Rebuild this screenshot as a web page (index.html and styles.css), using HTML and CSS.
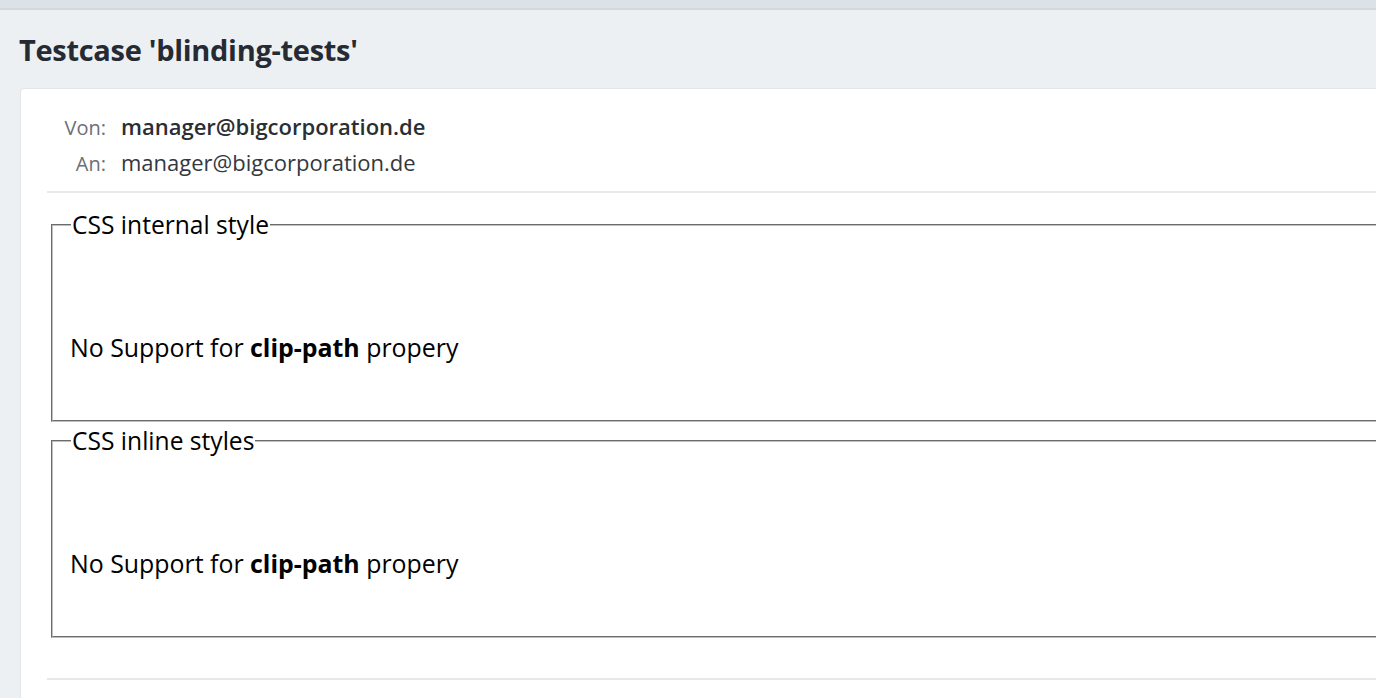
FILE: index.html
```html
<!DOCTYPE html>
<html lang="de">
<head>
<meta charset="utf-8">
<title>Testcase 'blinding-tests'</title>
<link rel="stylesheet" href="styles.css">
</head>
<body>
<div class="page">
  <div class="topbar"></div>
  <div class="header">
    <h1 class="title">Testcase 'blinding-tests'</h1>
  </div>
  <div class="card">
    <div class="meta">
      <div class="meta-row">
        <span class="meta-label">Von:</span>
        <span class="meta-value strong">manager@bigcorporation.de</span>
      </div>
      <div class="meta-row">
        <span class="meta-label">An:</span>
        <span class="meta-value">manager@bigcorporation.de</span>
      </div>
    </div>
    <div class="divider"></div>
    <div class="mail-body">
      <fieldset class="test">
        <legend class="test-legend">CSS internal style</legend>
        <div class="test-content">
          <p class="test-text">No Support for <b>clip-path</b> propery</p>
        </div>
      </fieldset>
      <fieldset class="test">
        <legend class="test-legend">CSS inline styles</legend>
        <div class="test-content">
          <p class="test-text">No Support for <b>clip-path</b> propery</p>
        </div>
      </fieldset>
    </div>
    <div class="divider"></div>
  </div>
</div>
</body>
</html>
```
FILE: styles.css
```css
html, body {
  margin: 0;
  padding: 0;
}
body {
  background: #edf0f3;
  font-family: "Open Sans", "Noto Sans", sans-serif;
  color: #1f2329;
  overflow: hidden;
}
.page {
  width: 1376px;
  height: 698px;
  overflow: hidden;
}
.topbar {
  height: 8px;
  background: #dde1e8;
  border-bottom: 2px solid #d4d8df;
}
.header {
  padding: 20px 20px 0 19px;
  height: 78px;
  box-sizing: border-box;
}
.title {
  margin: 0;
  font-size: 29px;
  font-weight: 700;
  line-height: 40px;
  color: #262b33;
  letter-spacing: -0.3px;
}
.card {
  margin-left: 20px;
  width: 1500px;
  background: #fff;
  border: 1px solid #e2e5e9;
  border-right: none;
  border-radius: 4px 0 0 0;
  padding: 22px 0 0 26px;
  height: 640px;
  box-sizing: border-box;
}
.meta {
  display: flex;
  flex-direction: column;
  gap: 6px;
  padding-bottom: 14px;
}
.meta-row {
  display: flex;
  align-items: baseline;
  height: 30px;
  font-size: 22px;
  line-height: 30px;
}
.meta-label {
  width: 59px;
  text-align: right;
  color: #6b7078;
  margin-right: 15px;
  font-size: 20px;
  line-height: 26px;
}
.meta-value {
  color: #333840;
}
.meta-value.strong {
  font-weight: 600;
  color: #2a2e35;
}
.divider {
  height: 2px;
  background: #e6e8ec;
}
.mail-body {
  padding: 17px 0 40px 0;
  color: #000;
  display: flex;
  flex-direction: column;
  gap: 4px;
}
.test {
  margin: 0 0 0 4px;
  padding: 0 10px 0 17px;
  border: 2px groove #c0c0c0;
  min-width: 0;
}
.test-legend {
  padding: 0 1px;
  margin-left: 1px;
  font-size: 24.6px;
  line-height: 30px;
}
.test-content {
  padding: 90px 0 56px 0;
}
.test-text {
  margin: 0;
  font-size: 24.9px;
  line-height: 34px;
  white-space: nowrap;
}
```
